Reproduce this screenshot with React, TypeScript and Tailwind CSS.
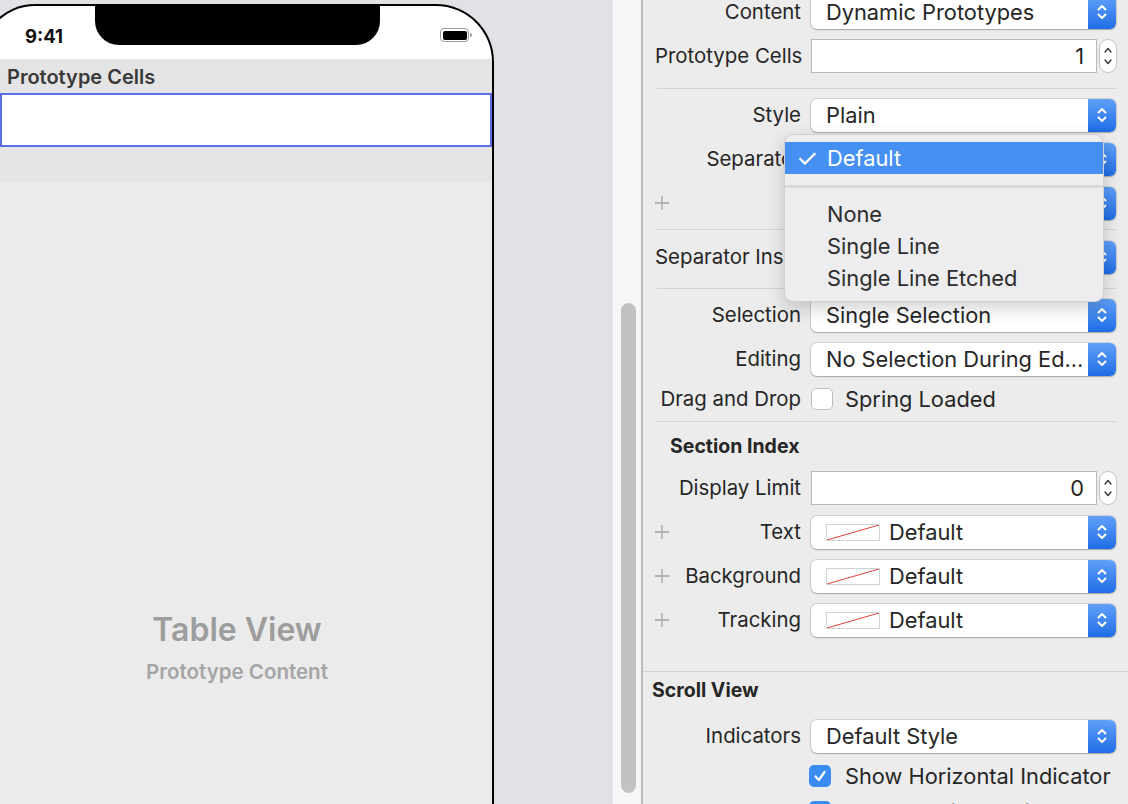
import React from 'react';

const Chevrons = () => (
  <svg width="12" height="20" viewBox="0 0 12 20" fill="none" stroke="white" strokeWidth="2" strokeLinecap="round" strokeLinejoin="round">
    <path d="M2.5 7.5 L6 4 L9.5 7.5" />
    <path d="M2.5 12.5 L6 16 L9.5 12.5" />
  </svg>
);

const Plus = () => (
  <svg width="14" height="14" viewBox="0 0 14 14" stroke="#a3a3a3" strokeWidth="1.3">
    <path d="M7 0 V14 M0 7 H14" />
  </svg>
);

const Popup = ({ children }: { children?: React.ReactNode }) => (
  <div className="flex h-[33px] w-[305px] items-stretch rounded-[6px] bg-white shadow-[0_0_0_1px_rgba(0,0,0,0.1),0_1px_1.5px_rgba(0,0,0,0.22)]">
    <div className="flex min-w-0 flex-1 items-center gap-[9px] pl-[15px] text-[21.8px] text-[#262626]">{children}</div>
    <div className="flex w-[28px] items-center justify-center rounded-r-[6px] bg-linear-to-b from-[#5fa0f8] to-[#1d6ce6]">
      <Chevrons />
    </div>
  </div>
);

const NumberField = ({ value }: { value: string }) => (
  <div className="flex items-center gap-[2px]">
    <div className="flex h-[34px] w-[286px] items-center justify-end border border-[#b9b9b9] bg-white pr-[12px] text-[21.8px] text-[#262626]">
      {value}
    </div>
    <div className="flex h-[34px] w-[18px] items-center justify-center rounded-[9px] border border-[#c4c4c4] bg-white">
      <svg width="10" height="24" viewBox="0 0 10 24" fill="none" stroke="#3a3a3a" strokeWidth="1.4" strokeLinecap="round" strokeLinejoin="round">
        <path d="M2 8 L5 4.5 L8 8" />
        <path d="M2 16 L5 19.5 L8 16" />
      </svg>
    </div>
  </div>
);

const Swatch = () => (
  <div className="h-[17px] w-[54px] shrink-0 border border-[#d2d2d2] bg-white">
    <svg width="52" height="15" viewBox="0 0 52 15">
      <line x1="0" y1="15" x2="52" y2="0" stroke="#e0403c" strokeWidth="1" />
    </svg>
  </div>
);

const Check = ({ on }: { on?: boolean }) =>
  on ? (
    <div className="flex h-[22px] w-[22px] items-center justify-center rounded-[5px] bg-[#3b8cf2]">
      <svg width="14" height="14" viewBox="0 0 14 14" fill="none" stroke="white" strokeWidth="2.2" strokeLinecap="round" strokeLinejoin="round">
        <path d="M2.5 7.5 L5.8 11 L11.5 3" />
      </svg>
    </div>
  ) : (
    <div className="h-[22px] w-[22px] rounded-[5px] border border-[#bdbdbd] bg-white" />
  );

const Row = ({ label, plus, className = 'h-[44px]', children }: { label?: string; plus?: boolean; className?: string; children?: React.ReactNode }) => (
  <div className={`flex items-center ${className}`}>
    <div className="flex w-[158px] items-center justify-between pl-[12px]">
      <span className="flex w-[14px]">{plus && <Plus />}</span>
      <span className="whitespace-nowrap text-[20.4px] text-[#262626]">{label}</span>
    </div>
    <div className="ml-[10px] flex items-center">{children}</div>
  </div>
);

const Divider = ({ className }: { className: string }) => <div className={`ml-[14px] mr-[12px] h-px bg-[#d4d4d4] ${className}`} />;

const Phone = () => (
  <div className="-ml-[20px] mt-[4px] flex w-[514px] flex-col overflow-hidden rounded-tl-[55px] rounded-tr-[58px] border-2 border-b-0 border-black bg-white">
    {/* status bar */}
    <div className="flex h-[53px] shrink-0 items-start">
      <div className="flex h-[53px] w-[113px] items-center pl-[43px] pt-[8px] text-[18.5px] font-bold text-[#111]">9:41</div>
      <div className="h-[39px] w-[285px] rounded-b-[24px] bg-black" />
      <div className="flex flex-1 items-center justify-end pr-[20px] pt-[22px]">
        <div className="flex items-center gap-[1px]">
          <div className="h-[14px] w-[29px] rounded-[4px] border border-[#9a9a9a] p-[1.5px]">
            <div className="h-full w-full rounded-[2px] bg-black" />
          </div>
          <div className="h-[4px] w-[2px] rounded-r bg-[#9a9a9a]" />
        </div>
      </div>
    </div>
    <div className="flex h-[34px] shrink-0 items-center bg-[#e4e4e4] pl-[25px] pt-[2px] text-[20px] font-semibold text-[#3a3a3a]">Prototype Cells</div>
    <div className="ml-[18px] h-[54px] shrink-0 border-2 border-[#5b6fe4] bg-white" />
    <div className="h-[35px] shrink-0 bg-[#e5e5e5]" />
    <div className="flex flex-1 flex-col items-center bg-[#ebebeb] pt-[429px]">
      <div className="text-[32px] font-semibold leading-[38px] text-[#9d9d9d]">Table View</div>
      <div className="mt-[11px] text-[20.5px] font-semibold leading-[24px] text-[#a5a5a5]">Prototype Content</div>
    </div>
  </div>
);

const Menu = () => (
  <div className="absolute left-[784px] top-[134px] w-[320px] rounded-[9px] border border-[#d0d0d0] bg-[#ededef] py-[7px] text-[21.8px] shadow-[0_6px_18px_rgba(0,0,0,0.18)]">
    <div className="flex h-[32px] items-center bg-[#4590f2] text-white">
      <span className="w-[42px] pl-[11px] text-[25px] leading-none">✓</span>
      <span>Default</span>
    </div>
    <div className="flex h-[24px] items-center">
      <div className="h-[3px] w-full bg-[#d9d9db]" />
    </div>
    {['None', 'Single Line', 'Single Line Etched'].map(t => (
      <div key={t} className="flex h-[32px] items-center pl-[42px] text-[#2c2c2c]">{t}</div>
    ))}
  </div>
);

export default function App() {
  return (
    <div className="relative flex h-[804px] w-[1128px] overflow-hidden bg-[#e1e2e6] font-['Inter',sans-serif]">
      <div className="flex h-full w-[613px] shrink-0">
        <Phone />
      </div>

      {/* scroller */}
      <div className="flex h-full w-[28px] shrink-0 flex-col bg-[#f6f6f6] pb-[11px] pl-[8px] pr-[5px] pt-[303px]">
        <div className="flex-1 rounded-full bg-[#c2c2c2]" />
      </div>

      {/* inspector */}
      <div className="flex h-full flex-1 flex-col border-l-2 border-[#bcbcbc] bg-[#ececec]">
        <div className="-mt-[10px] flex flex-col">
          <Row label="Content"><Popup>Dynamic Prototypes</Popup></Row>
          <Row label="Prototype Cells"><NumberField value="1" /></Row>
          <Divider className="mb-[4px] mt-[10px]" />
          <Row label="Style"><Popup>Plain</Popup></Row>
          <Row label="Separator"><Popup>Default</Popup></Row>
          <Row plus><Popup /></Row>
          <Divider className="mb-[5px] mt-[4px]" />
          <Row label="Separator Inset"><Popup>Default</Popup></Row>
          <Divider className="mb-[4px] mt-[9px]" />
          <Row label="Selection"><Popup>Single Selection</Popup></Row>
          <Row label="Editing"><Popup>No Selection During Ed...</Popup></Row>
          <Row label="Drag and Drop" className="h-[36px]">
            <div className="flex items-center gap-[12px]">
              <Check />
              <span className="text-[21.8px] text-[#262626]">Spring Loaded</span>
            </div>
          </Row>
          <Divider className="mt-[4px]" />
          <div className="flex h-[44px] items-center pl-[27px] pt-[6px] text-[19.5px] font-bold text-[#262626]">Section Index</div>
          <Row label="Display Limit"><NumberField value="0" /></Row>
          <Row label="Text" plus><Popup><Swatch />Default</Popup></Row>
          <Row label="Background" plus><Popup><Swatch />Default</Popup></Row>
          <Row label="Tracking" plus><Popup><Swatch />Default</Popup></Row>
          <div className="mt-[29px] h-px bg-[#d2d2d2]" />
          <div className="flex h-[42px] items-center pb-[4px] pl-[9px] text-[19.5px] font-bold text-[#262626]">Scroll View</div>
          <Row label="Indicators"><Popup>Default Style</Popup></Row>
          <Row className="h-[36px]">
            <div className="-ml-[2px] flex items-center gap-[14px]">
              <Check on />
              <span className="text-[21.8px] text-[#262626]">Show Horizontal Indicator</span>
            </div>
          </Row>
          <Row className="h-[36px]">
            <div className="-ml-[2px] flex items-center gap-[14px]">
              <Check on />
              <span className="text-[21.8px] text-[#262626]">Show Vertical Indicator</span>
            </div>
          </Row>
        </div>
      </div>

      <Menu />
    </div>
  );
}
